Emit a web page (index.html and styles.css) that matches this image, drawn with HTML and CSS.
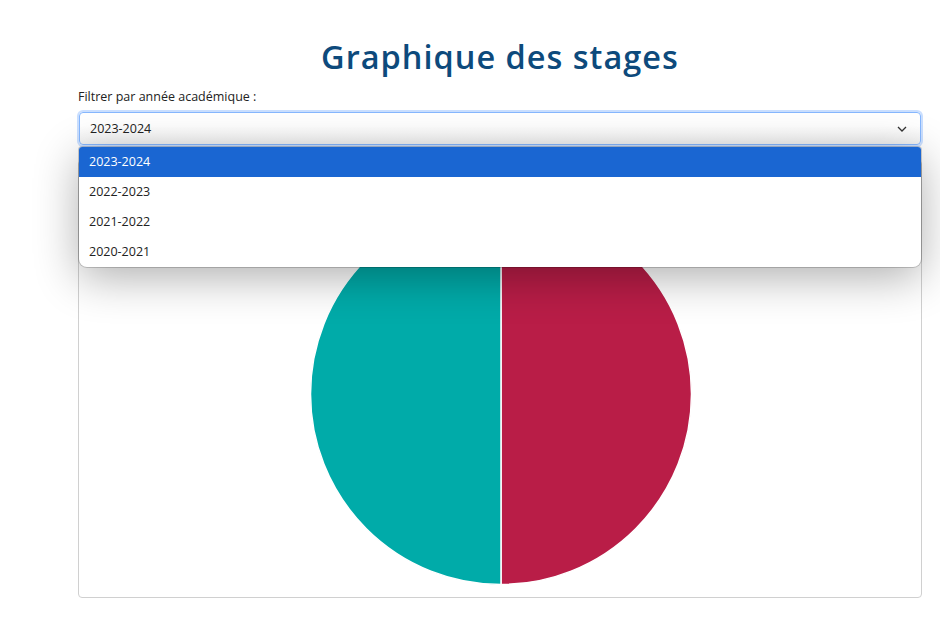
FILE: index.html
```html
<!DOCTYPE html>
<html lang="fr">
<head>
<meta charset="utf-8">
<title>Graphique des stages</title>
<link rel="stylesheet" href="styles.css">
</head>
<body>
<main class="container">
  <h1 class="title">Graphique des stages</h1>
  <label class="label" for="year">Filtrer par année académique :</label>
  <div class="select-wrap">
    <div class="select" id="year">
      <span>2023-2024</span>
      <svg class="chevron" width="10" height="6" viewBox="0 0 10 6"><path d="M1 1l4 4 4-4" fill="none" stroke="#333" stroke-width="1.3"/></svg>
    </div>
    <ul class="dropdown">
      <li class="opt active">2023-2024</li>
      <li class="opt">2022-2023</li>
      <li class="opt">2021-2022</li>
      <li class="opt">2020-2021</li>
    </ul>
  </div>
  <section class="card">
    <svg class="chart" width="842" height="436" viewBox="0 0 842 436">
      <path d="M422 42.5 A190.5 190.5 0 0 1 422 423.5 Z" fill="#b91d47" stroke="#fff" stroke-width="1.5"/>
      <path d="M422 423.5 A190.5 190.5 0 0 1 422 42.5 Z" fill="#00aba9" stroke="#fff" stroke-width="1.5"/>
    </svg>
  </section>
</main>
</body>
</html>
```
FILE: styles.css
```css
html, body {
  margin: 0;
  padding: 0;
  background: #fff;
}
body {
  font-family: "Open Sans", "Noto Sans", sans-serif;
  color: #212529;
}
.container {
  margin: 0 18px 0 78px;
  display: flex;
  flex-direction: column;
}
.title {
  margin: 35px 0 0;
  text-align: center;
  font-size: 32.5px;
  line-height: 44px;
  font-weight: 600;
  letter-spacing: 1px;
  color: #0d4a7c;
}
.label {
  margin-top: 9px;
  font-size: 12.5px;
  line-height: 18px;
  color: #222;
}
.select-wrap {
  position: relative;
  margin-top: 6px;
}
.select {
  height: 31px;
  margin: 0 1px;
  border: 1px solid #86b7fe;
  border-radius: 4px;
  box-shadow: 0 0 0 2px rgba(13, 110, 253, 0.22);
  background: linear-gradient(#fff 40%, #f2f2f2);
  display: flex;
  align-items: center;
  justify-content: space-between;
  padding: 0 13px 0 10px;
  font-size: 12.5px;
  color: #222;
}
.chevron {
  display: block;
}
.dropdown {
  position: absolute;
  left: 1px;
  right: 1px;
  top: 35px;
  margin: 0;
  padding: 0;
  list-style: none;
  background: #fff;
  border-radius: 3px 3px 8px 8px;
  box-shadow: 0 0 0 1px rgba(0, 0, 0, 0.18), 0 10px 45px rgba(0, 0, 0, 0.32);
  overflow: hidden;
  z-index: 2;
}
.opt {
  height: 30px;
  line-height: 30px;
  padding-left: 10px;
  font-size: 12.5px;
  color: #222;
}
.opt.active {
  background: #1a66d2;
  color: #fff;
}
.card {
  margin-top: 15px;
  border: 1px solid #d0d0d0;
  border-radius: 4px;
  height: 436px;
}
.chart {
  display: block;
}
```
